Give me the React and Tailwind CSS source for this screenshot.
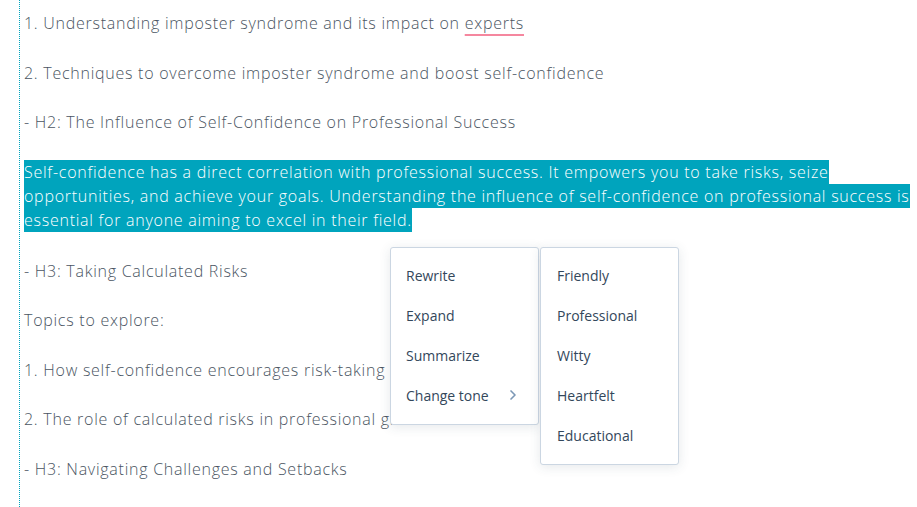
import { ChevronRight } from "lucide-react";

const lines = [
  "1. Understanding imposter syndrome and its impact on",
  "2. Techniques to overcome imposter syndrome and boost self-confidence",
  "- H2: The Influence of Self-Confidence on Professional Success",
];

const after = [
  "- H3: Taking Calculated Risks",
  "Topics to explore:",
  "1. How self-confidence encourages risk-taking",
  "2. The role of calculated risks in professional growth",
  "- H3: Navigating Challenges and Setbacks",
];

const actions = ["Rewrite", "Expand", "Summarize"];
const tones = ["Friendly", "Professional", "Witty", "Heartfelt", "Educational"];

export default function App() {
  return (
    <div className="relative h-[507px] w-full overflow-hidden bg-white">
      {/* EDITOR */}
      <div className="h-full pl-[19px]">
        <div
          className="h-full border-l border-dotted border-[#00a4bd] pl-[4px] pt-[11px] text-[16px] font-light leading-[24px] text-[#4a5562] tracking-[0.74px]"
          style={{ fontFamily: '"Open Sans", "Noto Sans", sans-serif' }}
        >
          <p className="mb-[25.5px] whitespace-nowrap">
            {lines[0]}{" "}
            <span className="underline decoration-[#f5879f] decoration-2 underline-offset-[5px]">experts</span>
          </p>
          <p className="mb-[25.5px] whitespace-nowrap">{lines[1]}</p>
          <p className="mb-[25.5px] whitespace-nowrap">{lines[2]}</p>

          <p className="mb-[27px] whitespace-nowrap">
            <span className="bg-[#00a4bd] py-[1px] text-white box-decoration-clone">
              Self-confidence has a direct correlation with professional success. It empowers you to take risks, seize{" "}
              <br />
              opportunities, and achieve your goals. Understanding the influence of self-confidence on professional success is
              <br />
              essential for anyone aiming to excel in their field.
            </span>
          </p>

          {after.map((t) => (
            <p key={t} className="mb-[25.5px] whitespace-nowrap">
              {t}
            </p>
          ))}
        </div>
      </div>

      {/* AI MENU */}
      <div
        className="absolute left-[390px] top-[247px] text-[14px] text-[#33475b]"
        style={{ fontFamily: '"Open Sans", Inter, sans-serif' }}
      >
        <div className="flex items-start gap-[1px]">
          <div className="w-[149px] rounded-[3px] border border-[#cbd6e2] bg-white py-[7px] pb-[9px] shadow-[0_2px_12px_rgba(45,62,80,0.12)]">
            {actions.map((a) => (
              <div key={a} className="flex h-[40px] items-center px-[15px]">
                {a}
              </div>
            ))}
            <div className="flex h-[40px] items-center justify-between pl-[15px] pr-[17px]">
              <span>Change tone</span>
              <ChevronRight size={16} strokeWidth={2.5} className="text-[#7c98b6]" />
            </div>
          </div>
          <div className="w-[139px] rounded-[3px] border border-[#cbd6e2] bg-white py-[7px] pb-[9px] shadow-[0_2px_12px_rgba(45,62,80,0.12)]">
            {tones.map((t) => (
              <div key={t} className="flex h-[40px] items-center px-[16px]">
                {t}
              </div>
            ))}
          </div>
        </div>
      </div>
    </div>
  );
}
